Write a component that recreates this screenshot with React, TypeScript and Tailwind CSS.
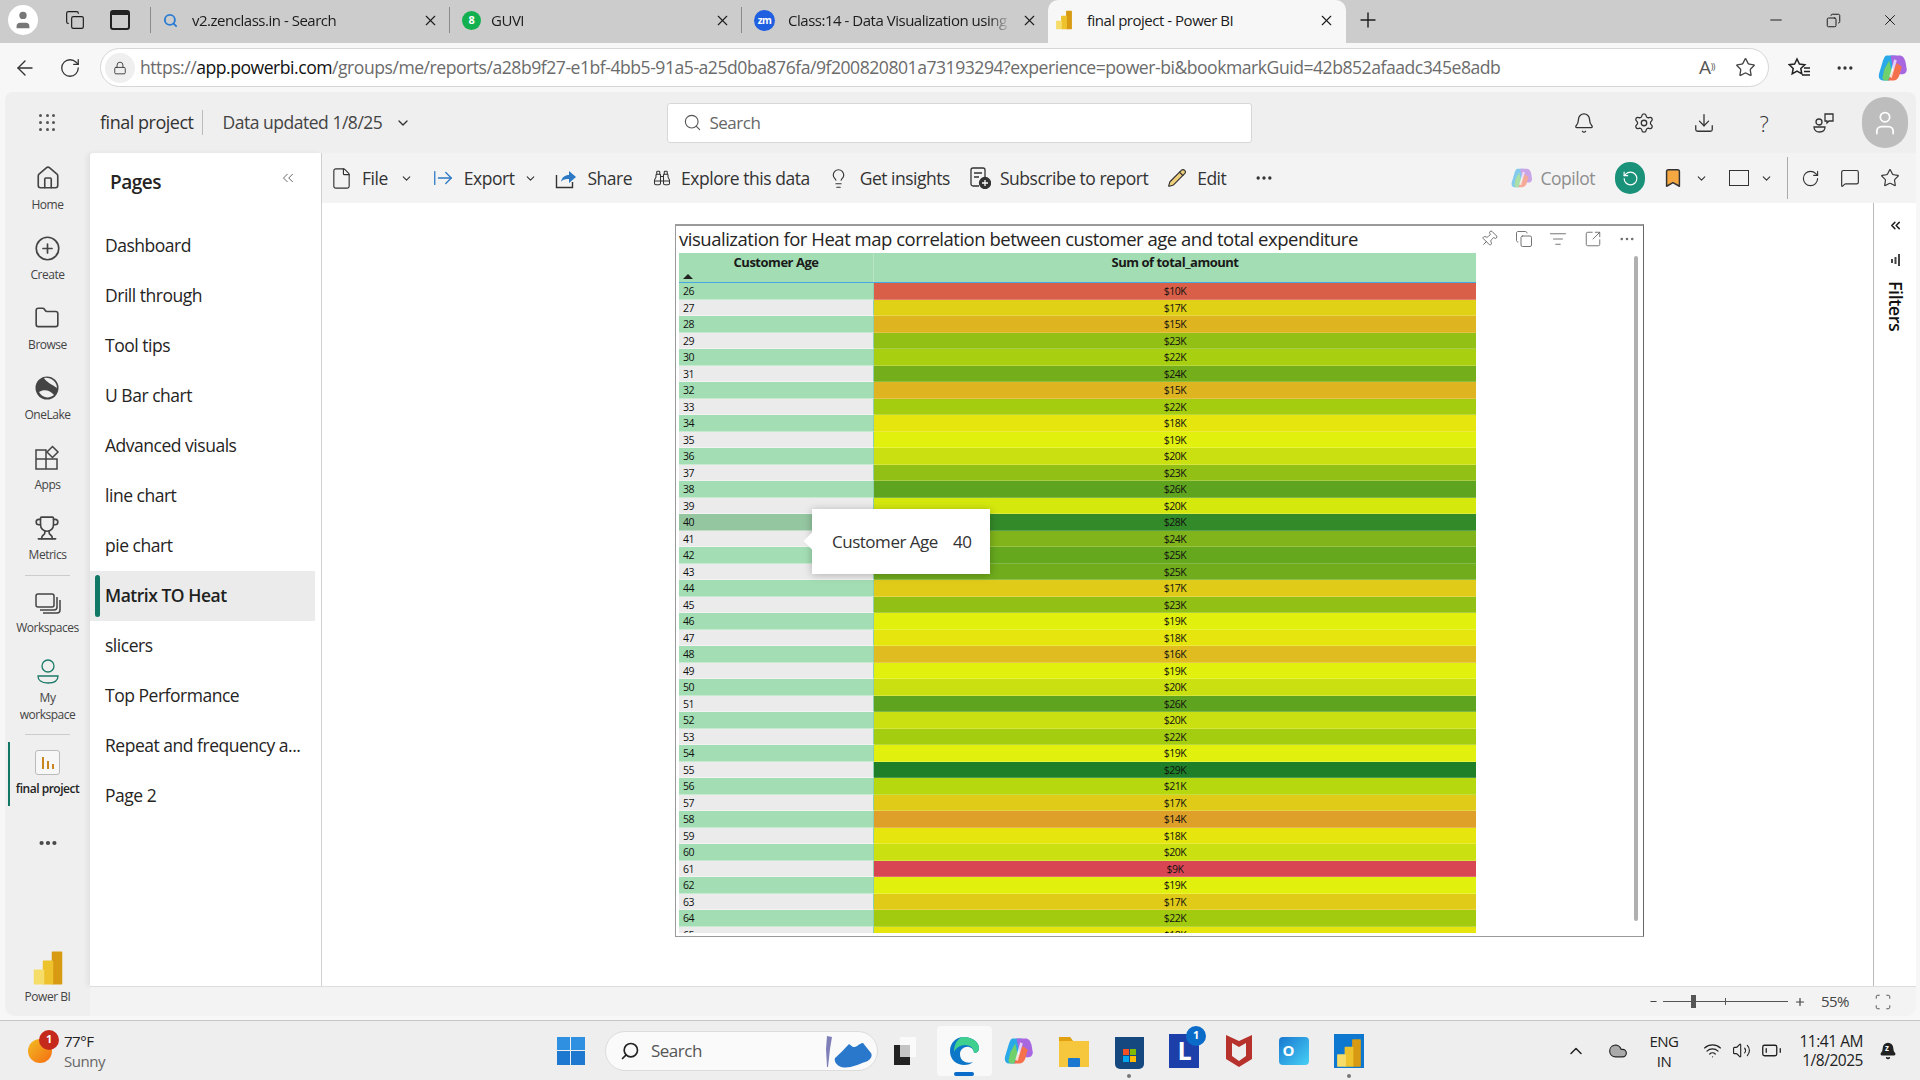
import {
  ArrowLeft, ArrowRightFromLine, Bell, Binoculars, Bookmark, ChevronDown, ChevronsLeft, ChevronUp, CirclePlus, Cloud, Copy,
  Download, Ellipsis, File, Folder, House, Lightbulb, ListFilter, Lock, MessageSquare, Minus, Pencil, Pin, Plus,
  RotateCcw, RotateCw, Scan, Search, Settings, SquareArrowOutUpRight, Star, Trophy, User, Volume2, Wifi, X, BatteryLow,
} from 'lucide-react';
import type { ReactNode } from 'react';

const Logo = ({ size = 24 }: { size?: number }) => (
  <svg width={size} height={size} viewBox="0 0 24 24">
    <rect x="14.5" y="1" width="7" height="22" rx="0.6" fill="#d79a12" />
    <rect x="8.5" y="7" width="7" height="16" rx="0.6" fill="#edc22c" />
    <rect x="2.5" y="13" width="7" height="10" rx="0.6" fill="#f6dd6a" />
  </svg>
);

const CopilotMark = ({ size = 24, faded = false }: { size?: number; faded?: boolean }) => (
  <svg width={size} height={size} viewBox="0 0 24 24" opacity={faded ? 0.55 : 1}>
    <path d="M7 2h7l-5 20H4C1 22 0 19 1 16L4 6c1-3 2-4 3-4z" fill="#2aa9e8" />
    <path d="M10 2h7c3 0 4 2 5 5l1 6c0 3-2 4-4 4h-6z" fill="#a866e0" />
    <path d="M5 13l4-7 2 9-3 7H6c-2 0-3-2-2-4z" fill="#6fd06c" />
    <path d="M15 8l4 3-2 7c-1 3-3 4-5 4H8z" fill="#f5704d" />
    <path d="M13 5l-4 14 2 1 4-14z" fill="#ffffff" opacity="0.7" />
  </svg>
);

const EdgeMark = () => (
  <svg width="32" height="32" viewBox="0 0 32 32">
    <path d="M16 2C8 2 2 8 2 16c0 9 7 14 14 14 4 0 7-1 9-3-5 2-13 0-13-8 0-5 5-8 9-7 4 1 5 4 5 6 3 0 5-2 5-5C31 7 24 2 16 2z" fill="#0c76c8" />
    <path d="M16 2c8 0 15 5 15 11 0 3-2 5-5 5 0-4-3-8-9-8-5 0-9 3-11 7C6 9 10 2 16 2z" fill="#3fcf8e" />
  </svg>
);

const tabs = [
  { id: 'search', title: 'v2.zenclass.in - Search', w: 'w-[299px]', icon: 'w-[41px]' },
  { id: 'guvi', title: 'GUVI', w: 'w-[292px]', icon: 'w-[41px]' },
  { id: 'zm', title: 'Class:14 - Data Visualization using', w: 'w-[307px]', icon: 'w-[46px]' },
];

const TabIcon = ({ id }: { id: string }) => {
  if (id === 'search') return <Search size={15} strokeWidth={3} className="text-[#2b7cd3]" />;
  if (id === 'guvi') {
    return <span className="flex h-[19px] w-[19px] items-center justify-center rounded-full bg-[#13b04f] text-[11px] font-bold text-white">8</span>;
  }
  return <span className="flex h-[21px] w-[21px] items-center justify-center rounded-full bg-[#1f5fe0] text-[10px] font-bold text-white">zm</span>;
};

const TabStrip = () => (
  <div className="flex h-[43px] shrink-0 items-center bg-[#cccccc] pb-[3px] text-[15px] text-[#1c1c1c]">
    <div className="ml-2 flex h-[30px] w-[30px] items-center justify-center rounded-full bg-white">
      <User size={22} fill="#777" strokeWidth={0} />
    </div>
    <Copy size={20} strokeWidth={1.4} className="ml-[27px]" />
    <div className="ml-[25px] h-[20px] w-[20px] rounded-[3px] border-2 border-[#222] border-t-[5px]" />
    <div className="ml-[20px] flex h-[43px]">
      {tabs.map((tab) => (
        <div key={tab.id} className={`flex h-full items-center py-[9px] ${tab.w}`}>
          <span className="h-[26px] w-px bg-[#8a8a8a]" />
          <span className={`flex justify-start pl-[12px] ${tab.icon}`}><TabIcon id={tab.id} /></span>
          <span className="min-w-0 flex-1 overflow-hidden whitespace-nowrap [mask-image:linear-gradient(to_right,black_90%,transparent)]">{tab.title}</span>
          <X size={17} strokeWidth={1.6} className="mx-[10px] shrink-0" />
        </div>
      ))}
    </div>
    <div className="mt-[3px] flex h-[43px] w-[298px] items-center rounded-t-[10px] bg-[#f7f7f7] pb-[3px] pl-[6px]">
      <Logo size={20} />
      <span className="ml-[13px] flex-1">final project - Power BI</span>
      <X size={17} strokeWidth={1.6} className="mr-[11px]" />
    </div>
    <Plus size={24} strokeWidth={1.4} className="ml-[10px]" />
    <Minus size={18} strokeWidth={1.3} className="ml-[387px]" />
    <Copy size={15} strokeWidth={1.6} className="ml-[41px] -scale-x-100" />
    <X size={18} strokeWidth={1.3} className="ml-[40px]" />
  </div>
);

const AddressBar = () => (
  <div className="flex h-[49px] shrink-0 items-center bg-[#f7f7f7] text-[#333]">
    <ArrowLeft size={24} strokeWidth={1.4} className="ml-[13px]" />
    <RotateCw size={22} strokeWidth={1.4} className="ml-[22px]" />
    <div className="ml-[19px] flex h-[39px] w-[1669px] items-center rounded-full border border-[#d6d6d6] bg-white pl-[4px]">
      <span className="flex h-[30px] w-[30px] items-center justify-center rounded-full bg-[#efefef]">
        <Lock size={14} strokeWidth={1.5} />
      </span>
      <span className="ml-[5px] flex-1 text-[17.6px] text-[#6b6b6b]">
        https://<span className="text-[#111]">app.powerbi.com</span>/groups/me/reports/a28b9f27-e1bf-4bb5-91a5-a25d0ba876fa/9f200820801a73193294?experience=power-bi&amp;bookmarkGuid=42b852afaadc345e8adb
      </span>
      <span className="text-[19px] text-[#555]">A<sup className="text-[9px]">))</sup></span>
      <Star size={21} strokeWidth={1.5} className="ml-[20px] mr-[12px] text-[#444]" />
    </div>
    <svg width="24" height="22" viewBox="0 0 24 22" fill="none" stroke="#222" strokeWidth="1.5" className="ml-[19px]">
      <path d="M9 2l2.4 5 5.4.7-4 3.7 1 5.4L9 14.2 4.200 16.800l1-5.400-4-3.700L6.600 7z" />
      <path d="M16 11h6M16 14.500h6M14 18h8" />
    </svg>
    <Ellipsis size={20} className="ml-[23px]" />
    <span className="ml-[23px]"><CopilotMark size={30} /></span>
  </div>
);

const HeaderRow = () => (
  <div className="flex h-[61px] shrink-0 items-center text-[#333]">
    <div className="ml-[34px] grid w-[16px] grid-cols-3 gap-[4px]">
      {Array.from({ length: 9 }).map((_, i) => <span key={i} className="h-[3px] w-[3px] rounded-full bg-[#555]" />)}
    </div>
    <span className="ml-[45px] whitespace-nowrap text-[18px]">final project</span>
    <span className="ml-[8px] h-[25px] w-px bg-[#bbb]" />
    <span className="ml-[20px] whitespace-nowrap text-[17.5px] text-[#444]">Data updated 1/8/25</span>
    <ChevronDown size={16} className="ml-[13px]" />
    <div className="ml-[256px] flex h-[40px] w-[585px] shrink-0 items-center rounded-[3px] border border-[#d8d8d8] bg-white pl-[15px]">
      <Search size={19} strokeWidth={1.4} className="text-[#555]" />
      <span className="ml-[7px] text-[17px] text-[#666]">Search</span>
    </div>
    <div className="ml-auto flex items-center pr-[8px]">
      <Bell size={22} strokeWidth={1.4} />
      <Settings size={22} strokeWidth={1.4} className="ml-[38px]" />
      <Download size={22} strokeWidth={1.4} className="ml-[38px]" />
      <span className="ml-[38px] w-[22px] text-center text-[22px] font-light leading-none">?</span>
      <svg width="24" height="24" viewBox="0 0 24 24" fill="none" stroke="#333" strokeWidth="1.3" className="ml-[37px]">
        <circle cx="7" cy="11" r="3" />
        <path d="M2 16h11c0 3-2 5-5.500 5S2 19 2 16z" />
        <path d="M13 3h8v7h-4l-2 2v-2h-2z" />
      </svg>
      <div className="ml-[26px] flex h-[51px] w-[46px] items-center justify-center rounded-full bg-[#bdbdbd]">
        <User size={28} strokeWidth={1.5} className="text-white" />
      </div>
    </div>
  </div>
);

const navItems = [
  { label: 'Home', icon: <House size={26} strokeWidth={1.5} /> },
  { label: 'Create', icon: <CirclePlus size={27} strokeWidth={1.5} /> },
  { label: 'Browse', icon: <Folder size={26} strokeWidth={1.5} /> },
  {
    label: 'OneLake',
    icon: (
      <svg width="26" height="26" viewBox="0 0 26 26">
        <circle cx="13" cy="13" r="11.500" fill="#444" />
        <path d="M10 3c7-1 13 4 13 10-5-4-10-5-13-10z" fill="#efefef" />
        <path d="M5 17c5-3 11-2 15 3-5 4-12 3-15-3z" fill="#efefef" />
      </svg>
    ),
  },
  {
    label: 'Apps',
    icon: (
      <svg width="26" height="26" viewBox="0 0 26 26" fill="none" stroke="#444" strokeWidth="1.500">
        <path d="M2 5h10v9H2zM2 14h10v10H2zM12 14h11v10H12z" />
        <path d="M18.500 1.500l5.500 5.500-5.500 5.500L13 7z" />
      </svg>
    ),
  },
  { label: 'Metrics', icon: <Trophy size={26} strokeWidth={1.5} /> },
];

const LeftNav = () => (
  <div className="flex w-[85px] shrink-0 flex-col items-center pt-[2px] text-[12px] text-[#444]">
    {navItems.map((item) => (
      <div key={item.label} className="flex h-[70px] flex-col items-center pt-[9px]">
        <span className="flex h-[28px] items-center">{item.icon}</span>
        <span className="mt-[5px] leading-[16px]">{item.label}</span>
      </div>
    ))}
    <div className="h-px w-[45px] bg-[#ccc]" />
    <svg width="26" height="22" viewBox="0 0 26 22" fill="none" stroke="#444" strokeWidth="1.500" className="mt-[17px]">
      <rect x="1" y="1" width="18" height="13" rx="2" />
      <path d="M22 4v10c0 2-1 3-3 3H5M25 7v10c0 2-1 3-3 3H8" />
    </svg>
    <span className="mt-[5px] leading-[16px]">Workspaces</span>
    <svg width="24" height="28" viewBox="0 0 24 28" fill="none" stroke="#1d7a68" strokeWidth="1.3" className="mt-[23px]">
      <circle cx="12" cy="7" r="6" />
      <path d="M2 17h20c0 4-3 7-10 7S2 21 2 17z" />
    </svg>
    <span className="mt-[2px] text-center leading-[17px]">My<br />workspace</span>
    <div className="mt-[11px] h-px w-[45px] bg-[#ccc]" />
    <div className="relative mt-[7px] flex w-full flex-col items-center">
      <span className="absolute bottom-0 left-[3px] top-0 w-[2px] bg-[#117865]" />
      <span className="mt-[8px] flex h-[25px] w-[25px] items-center justify-center rounded-[3px] border border-[#bbb] bg-[#f7f7f7]">
        <svg width="14" height="14" viewBox="0 0 14 14" fill="#c9851e"><rect x="1" y="1" width="2" height="12" /><rect x="6" y="5" width="2" height="8" /><rect x="11" y="8" width="2" height="5" /></svg>
      </span>
      <span className="mb-[9px] mt-[6px] font-semibold leading-[16px] text-[#222]">final project</span>
    </div>
    <Ellipsis size={22} strokeWidth={2.6} className="mt-[26px]" />
    <span className="mt-[96px]"><Logo size={36} /></span>
    <span className="mt-[3px] leading-[16px]">Power BI</span>
  </div>
);

const pages = ['Dashboard', 'Drill through', 'Tool tips', 'U Bar chart', 'Advanced visuals', 'line chart', 'pie chart', 'Matrix TO Heat', 'slicers', 'Top Performance', 'Repeat and frequency a...', 'Page 2'];

const PagesPane = () => (
  <div className="w-[232px] shrink-0 rounded-tl-[3px] border-r border-r-[#d0d0d0] bg-white shadow-[-3px_0_5px_rgba(0,0,0,0.06)]">
    <div className="flex h-[68px] items-center justify-between pb-[10px] pl-[20px] pr-[24px]">
      <span className="text-[19px] font-semibold text-[#252423]">Pages</span>
      <ChevronsLeft size={18} strokeWidth={1.2} className="mb-[8px] text-[#555]" />
    </div>
    {pages.map((page) => (
      <div
        key={page}
        className={page === 'Matrix TO Heat'
          ? 'relative flex h-[50px] w-[225px] items-center bg-[#ebebeb] pb-[2px] pl-[15px] text-[17.5px] font-semibold text-[#201f1e]'
          : 'flex h-[50px] items-center pb-[2px] pl-[15px] text-[17.5px] text-[#252423]'}
      >
        {page === 'Matrix TO Heat' && <span className="absolute bottom-[4px] left-[5px] top-[4px] w-[5px] rounded-full bg-[#117865]" />}
        {page}
      </div>
    ))}
  </div>
);

const Toolbar = () => (
  <div className="flex h-[50px] shrink-0 items-center bg-[#f3f3f3] pr-[16px] text-[17.5px] text-[#333]">
    <File size={23} strokeWidth={1.2} className="ml-[8px]" />
    <span className="ml-[9px]">File</span>
    <ChevronDown size={13} className="ml-[12px]" />
    <ArrowRightFromLine size={22} strokeWidth={1.4} className="ml-[19px] text-[#2c78c4]" />
    <span className="ml-[10px]">Export</span>
    <ChevronDown size={13} className="ml-[10px]" />
    <svg width="22" height="22" viewBox="0 0 22 22" fill="none" className="ml-[18px]">
      <path d="M1.500 8v12.500h16V15" stroke="#333" strokeWidth="1.400" />
      <path d="M6 15c1-5 4-7 8-7V4l7 6-7 6v-4c-3 0-6 0-8 3z" fill="#2c78c4" />
    </svg>
    <span className="ml-[10px]">Share</span>
    <Binoculars size={18} strokeWidth={1.4} className="ml-[21px]" />
    <span className="ml-[10px]">Explore this data</span>
    <Lightbulb size={21} strokeWidth={1.3} className="ml-[18px]" />
    <span className="ml-[11px]">Get insights</span>
    <svg width="22" height="22" viewBox="0 0 22 22" fill="none" stroke="#333" strokeWidth="1.300" className="ml-[19px]">
      <path d="M10 19H4a2 2 0 0 1-2-2V3a2 2 0 0 1 2-2h10a2 2 0 0 1 2 2v7M5 6h8M5 10h5" />
      <circle cx="16" cy="16" r="5.500" fill="#333" />
      <path d="M16 13v6M13 16h6" stroke="#fff" />
    </svg>
    <span className="ml-[9px]">Subscribe to report</span>
    <Pencil size={20} strokeWidth={1.4} fill="#f0cf7a" className="ml-[19px]" />
    <span className="ml-[10px]">Edit</span>
    <Ellipsis size={20} className="ml-[28px]" />
    <div className="ml-auto flex items-center">
      <CopilotMark size={22} faded />
      <span className="ml-[8px] text-[#8e8e8e]">Copilot</span>
      <span className="ml-[20px] flex h-[32px] w-[30px] items-center justify-center rounded-full bg-[#1a9279]">
        <RotateCcw size={17} strokeWidth={1.6} className="text-white" />
      </span>
      <Bookmark size={22} strokeWidth={1.6} fill="#f5a742" className="ml-[17px]" />
      <ChevronDown size={13} className="ml-[11px]" />
      <span className="ml-[21px] h-[16px] w-[20px] border-[1.5px] border-[#333]" />
      <ChevronDown size={13} className="ml-[11px]" />
      <span className="ml-[14px] h-[42px] w-px bg-[#aaa]" />
      <RotateCw size={19} strokeWidth={1.4} className="ml-[13px]" />
      <MessageSquare size={20} strokeWidth={1.4} className="ml-[20px]" />
      <Star size={20} strokeWidth={1.4} className="ml-[20px]" />
    </div>
  </div>
);

const rows: [number, string, string][] = [
  [26, '$10K', 'bg-[#d95f48]'], [27, '$17K', 'bg-[#e0d016]'], [28, '$15K', 'bg-[#deb420]'], [29, '$23K', 'bg-[#93c015]'],
  [30, '$22K', 'bg-[#a8cf10]'], [31, '$24K', 'bg-[#74ae1a]'], [32, '$15K', 'bg-[#deb420]'], [33, '$22K', 'bg-[#a5cd10]'],
  [34, '$18K', 'bg-[#e6e60e]'], [35, '$19K', 'bg-[#e1f00c]'], [36, '$20K', 'bg-[#cbe010]'], [37, '$23K', 'bg-[#93c015]'],
  [38, '$26K', 'bg-[#5fa41f]'], [39, '$20K', 'bg-[#d4e80e]'], [40, '$28K', 'bg-[#338a28]'], [41, '$24K', 'bg-[#80b41a]'],
  [42, '$25K', 'bg-[#65a81e]'], [43, '$25K', 'bg-[#70ac1c]'], [44, '$17K', 'bg-[#e0cc18]'], [45, '$23K', 'bg-[#93c015]'],
  [46, '$19K', 'bg-[#e1f00c]'], [47, '$18K', 'bg-[#e6e60e]'], [48, '$16K', 'bg-[#e0bc20]'], [49, '$19K', 'bg-[#e1f00c]'],
  [50, '$20K', 'bg-[#cbe010]'], [51, '$26K', 'bg-[#5fa41f]'], [52, '$20K', 'bg-[#cbe010]'], [53, '$22K', 'bg-[#a5cd10]'],
  [54, '$19K', 'bg-[#e1f00c]'], [55, '$29K', 'bg-[#1f7f28]'], [56, '$21K', 'bg-[#b5d80f]'], [57, '$17K', 'bg-[#e0cc18]'],
  [58, '$14K', 'bg-[#dfa02a]'], [59, '$18K', 'bg-[#e6e60e]'], [60, '$20K', 'bg-[#cbe010]'], [61, '$9K', 'bg-[#d84654]'],
  [62, '$19K', 'bg-[#e1f00c]'], [63, '$17K', 'bg-[#e0cc18]'], [64, '$22K', 'bg-[#a2cb10]'], [65, '$18K', 'bg-[#e6e60e]'],
];

const ageCell = (age: number) => {
  if (age === 40) return 'bg-[#94c6a0]';
  return age % 2 === 0 ? 'bg-[#a3ddb3]' : 'bg-[#ebebeb]';
};

const Matrix = () => (
  <div className="relative ml-[3px] h-[680px] w-[797px] overflow-hidden">
    <div className="flex h-[29px] bg-[#a3ddb3] text-[13px] font-bold leading-[19px] text-[#1a1a1a]">
      <div className="relative w-[195px] border-r border-r-[#b9e4c5] text-center">
        Customer Age
        <span className="absolute bottom-[3px] left-[4px] h-0 w-0 border-x-[5px] border-b-[5px] border-x-transparent border-b-[#222]" />
      </div>
      <div className="flex-1 text-center">Sum of total_amount</div>
    </div>
    <div className="h-px bg-[#45a8e0]" />
    {rows.map(([age, amount, color]) => (
      <div key={age} className="flex h-[16.5px] text-[10.5px] leading-[16px] text-[#111]">
        <div className={`w-[195px] border-b border-b-white/40 border-r border-r-[#8fcfb0] pl-[4px] ${ageCell(age)}`}>{age}</div>
        <div className={`flex-1 border-b border-b-white/20 text-center ${color}`}>{amount}</div>
      </div>
    ))}
  </div>
);

const Visual = () => (
  <div className="relative ml-[353px] mt-[21px] h-[713px] w-[969px] border border-[#9a9a9a] border-r-[#666] border-t-2 bg-white">
    <div className="flex h-[27px] items-center justify-between pb-[2px] pl-[3px] pr-[7px]">
      <span className="text-[18.5px] text-[#252423]">visualization for Heat map correlation between customer age and total expenditure</span>
      <div className="flex items-center gap-[16.5px] text-[#666]">
        <Pin size={18} strokeWidth={1.2} className="rotate-45" />
        <Copy size={18} strokeWidth={1.2} />
        <ListFilter size={18} strokeWidth={1.2} />
        <SquareArrowOutUpRight size={18} strokeWidth={1.2} />
        <Ellipsis size={18} strokeWidth={1.4} />
      </div>
    </div>
    <Matrix />
    <span className="absolute bottom-[15px] right-[5px] top-[30px] w-[4px] rounded-full bg-[#b0b0b0]" />
    <div className="absolute left-[136px] top-[283px] flex h-[65px] w-[178px] items-center bg-white pl-[20px] text-[17px] text-[#333] shadow-[0_1px_8px_rgba(0,0,0,0.25)]">
      <span className="absolute left-[-6px] top-[26px] h-[12px] w-[12px] rotate-45 bg-white" />
      Customer Age<span className="ml-[15px]">40</span>
    </div>
  </div>
);

const FiltersRail = () => (
  <div className="flex w-[43px] shrink-0 flex-col items-center border-l border-l-[#bbb] bg-white pt-[15px]">
    <ChevronsLeft size={15} strokeWidth={2.4} className="text-[#222]" />
    <svg width="10" height="12" viewBox="0 0 10 12" fill="#444" className="mt-[21px]"><rect x="1" y="5" width="2" height="4" /><rect x="4.5" y="3" width="2" height="7" /><rect x="8" y="0" width="2" height="12" /></svg>
    <span className="mt-[15px] text-[18px] font-semibold text-[#111] [writing-mode:vertical-rl]">Filters</span>
  </div>
);

const StatusBar = () => (
  <div className="flex h-[30px] shrink-0 items-center justify-end rounded-br-[10px] border-t border-t-[#ddd] bg-[#f3f3f3] pr-[24px] text-[#444]">
    <Minus size={9} strokeWidth={3} />
    <div className="relative ml-[5px] h-px w-[125px] bg-[#555]">
      <span className="absolute left-[28px] top-[-6px] h-[13px] w-[5px] bg-[#555]" />
      <span className="absolute left-[62px] top-[-3px] h-[7px] w-px bg-[#555]" />
    </div>
    <Plus size={12} strokeWidth={2.4} className="ml-[6px]" />
    <span className="ml-[15px] text-[15px]">55%</span>
    <Scan size={18} strokeWidth={1.2} className="ml-[25px]" />
  </div>
);

const TaskBtn = ({ children, className = '' }: { children: ReactNode; className?: string }) => (
  <span className={`relative flex h-[50px] w-[55px] items-center justify-center ${className}`}>{children}</span>
);

const Taskbar = () => (
  <div className="flex h-[60px] shrink-0 items-center border-t border-t-[#c6c6c6] bg-[#eeeeee] text-[#222]">
    <div className="relative ml-[28px] h-[24px] w-[24px] rounded-full bg-[linear-gradient(135deg,#f2bd24,#f56c12)]">
      <span className="absolute left-[11px] top-[-9px] flex h-[20px] w-[20px] items-center justify-center rounded-full bg-[#c4291c] text-[11px] font-bold text-white">1</span>
    </div>
    <div className="ml-[12px] text-[15px] leading-[20px]">
      <div>77°F</div>
      <div className="text-[#666]">Sunny</div>
    </div>
    <div className="ml-[452px] grid h-[28px] w-[28px] grid-cols-2 gap-[1px]">
      <span className="bg-[#2f8fe0]" /><span className="bg-[#2f8fe0]" /><span className="bg-[#1f78d0]" /><span className="bg-[#1f78d0]" />
    </div>
    <div className="ml-[20px] flex h-[40px] w-[273px] items-center rounded-full border border-[#dcdcdc] bg-[#fafafa] pl-[14px]">
      <Search size={20} strokeWidth={2} className="-scale-x-100" />
      <span className="ml-[11px] text-[17px] text-[#555]">Search</span>
      <svg width="56" height="38" viewBox="0 0 56 38" className="ml-auto mr-[2px]">
        <path d="M8 4l5 1-2 12-2 18H8l-1-18z" fill="#7f7fb8" />
        <path d="M16 26c4-3 10-10 14-14l4 3c3 1 8-5 10-4l8 10c2 3-1 8-6 9-8 3-18 8-26 4-3-2-5-5-4-8z" fill="#2a78cc" />
      </svg>
    </div>
    <TaskBtn>
      <svg width="24" height="30" viewBox="0 0 24 30">
        <rect x="7" y="1" width="16" height="20" fill="#fafafa" />
        <rect x="1" y="9" width="16" height="20" fill="#222" />
        <rect x="7" y="9" width="10" height="12" fill="#c4c4c4" />
      </svg>
    </TaskBtn>
    <TaskBtn className="ml-[4px] rounded-[4px] bg-[#f9f9f9]">
      <EdgeMark />
      <span className="absolute bottom-0 h-[4px] w-[20px] rounded-full bg-[#0a6cc8]" />
    </TaskBtn>
    <TaskBtn><CopilotMark size={30} /></TaskBtn>
    <TaskBtn>
      <svg width="30" height="32" viewBox="0 0 30 32">
        <path d="M0 2h11l3 4h16v26H0z" fill="#f6c63c" />
        <path d="M0 2h11l3 4H0z" fill="#e0a010" />
        <rect x="9" y="23" width="12" height="9" rx="1" fill="#1a78d0" />
      </svg>
    </TaskBtn>
    <TaskBtn>
      <span className="mt-[4px] grid h-[32px] w-[29px] grid-cols-2 content-center justify-center gap-[1px] rounded-b-[5px] bg-[#15487e] px-[8px] pt-[6px]">
        <span className="h-[6px] bg-[#f25022]" /><span className="h-[6px] bg-[#7fba00]" /><span className="h-[6px] bg-[#00a4ef]" /><span className="h-[6px] bg-[#ffb900]" />
      </span>
      <span className="absolute bottom-[-2px] h-[4px] w-[4px] rounded-full bg-[#777]" />
    </TaskBtn>
    <TaskBtn>
      <span className="flex h-[34px] w-[30px] items-center justify-center bg-[#1c3faa] text-[25px] font-bold text-white">L</span>
      <span className="absolute right-[6px] top-[0px] flex h-[20px] w-[20px] items-center justify-center rounded-full bg-[#0a6cc8] text-[11px] font-bold text-white">1</span>
    </TaskBtn>
    <TaskBtn>
      <svg width="28" height="34" viewBox="0 0 28 34"><path d="M1 1l13 6 13-6v24l-13 8-13-8z" fill="#b8322d" /><path d="M7 9l7 4 7-4v13l-7 5-7-5z" fill="#eee" /></svg>
    </TaskBtn>
    <TaskBtn>
      <span className="flex h-[28px] w-[30px] items-center justify-start rounded-[4px] bg-[linear-gradient(135deg,#1a78d0,#46d0f5)] pl-[3px] text-[15px] font-bold text-white">O</span>
    </TaskBtn>
    <TaskBtn>
      <span className="flex h-[34px] w-[30px] items-end bg-[#0e78d0]"><Logo size={30} /></span>
      <span className="absolute bottom-[-2px] h-[4px] w-[4px] rounded-full bg-[#777]" />
    </TaskBtn>
    <ChevronUp size={20} strokeWidth={1.8} className="ml-[189px]" />
    <Cloud size={20} strokeWidth={1.4} fill="#aaa" className="ml-[22px]" />
    <div className="ml-[17px] w-[38px] text-center text-[15px] leading-[20px]">ENG<br />IN</div>
    <Wifi size={19} strokeWidth={1.5} className="ml-[20px]" />
    <Volume2 size={19} strokeWidth={1.4} className="ml-[10px]" />
    <BatteryLow size={21} strokeWidth={1.5} className="ml-[10px]" />
    <div className="ml-[11px] w-[70px] text-right text-[15.5px] leading-[19px]">11:41 AM<br />1/8/2025</div>
    <span className="relative ml-[16px]">
      <Bell size={18} strokeWidth={2} fill="#222" />
      <span className="absolute left-[6px] top-[2px] text-[8px] font-bold leading-none text-white">z</span>
    </span>
  </div>
);

export default function App() {
  return (
    <div className="flex h-screen w-[1920px] flex-col overflow-hidden bg-[#f7f7f7] font-['Open_Sans',sans-serif] tracking-[-0.03em]">
      <TabStrip />
      <AddressBar />
      <div className="ml-[5px] mr-[4px] flex min-h-0 flex-1 flex-col rounded-[10px] rounded-t-[8px] bg-[#efefef]">
        <HeaderRow />
        <div className="flex min-h-0 flex-1">
          <LeftNav />
          <div className="flex min-w-0 flex-1 flex-col">
            <div className="flex min-h-0 flex-1">
              <PagesPane />
              <div className="flex min-w-0 flex-1 flex-col">
                <Toolbar />
                <div className="flex min-h-0 flex-1 bg-white">
                  <div className="min-w-0 flex-1"><Visual /></div>
                  <FiltersRail />
                </div>
              </div>
            </div>
            <StatusBar />
          </div>
        </div>
      </div>
      <div className="h-[4px] shrink-0" />
      <Taskbar />
    </div>
  );
}
